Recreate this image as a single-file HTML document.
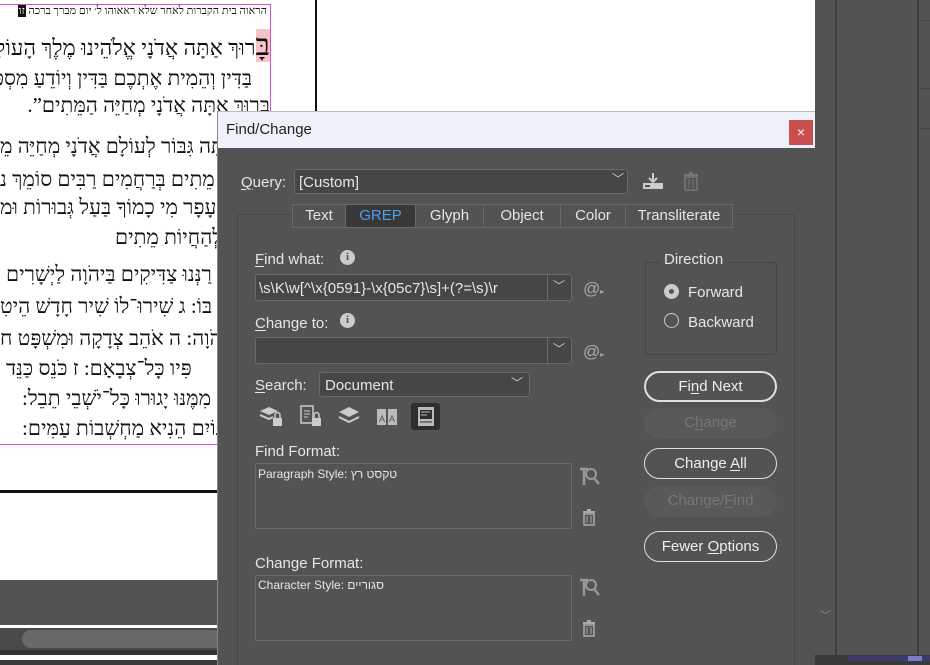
<!DOCTYPE html>
<html><head><meta charset="utf-8"><style>
*{margin:0;padding:0;box-sizing:border-box}
html,body{width:930px;height:665px;overflow:hidden}
body{position:relative;background:#fff;font-family:"Liberation Sans",sans-serif}
.abs{position:absolute}
.heb{font-family:"Liberation Serif","Noto Serif CJK SC","DejaVu Serif",serif;direction:rtl;white-space:nowrap;color:#111;font-size:21px;position:absolute;right:660px;text-align:right}
.hl{font-family:"Liberation Serif","Noto Serif CJK SC","DejaVu Serif",serif;direction:rtl;white-space:nowrap;color:#111;font-size:21px;position:absolute}
.dlg{left:217px;top:111px;width:598px;height:554px;background:#535353;border-left:1px solid #888}
.t{color:#e6e6e6;font-size:15px;position:absolute;white-space:nowrap}
.box{position:absolute;border:1px solid #6a6a6a;background:#464646;border-radius:3px}
.btn{position:absolute;left:644px;width:133px;height:31px;border:1px solid #e0e0e0;border-radius:16px;color:#eee;font-size:15px;text-align:center;line-height:29px}
.dis{border:none;background:#595959;color:#777}
.tab{position:absolute;top:204px;height:24px;border:1px solid #6a6a6a;color:#e6e6e6;font-size:15px;text-align:center;line-height:22px;background:#535353}
u{text-decoration:underline;text-underline-offset:2px}
</style></head><body>
<div class="abs" style="left:0;top:4px;width:271px;height:441px;border:1px solid #d64ed6;border-left:none"></div>
<div class="abs" style="left:315px;top:0;width:2px;height:111px;background:#111"></div>
<div class="abs" style="left:0;top:490px;width:217px;height:3px;background:#111"></div>
<div class="heb" style="top:5px;font-size:11px;right:663px">הראוה בית הקברות לאחר שלא ראאוהו ל׳ יום מברך ברכה <span style="background:#111;color:#fff;padding:0 1px">זו</span></div>
<div class="heb" style="top:33px;font-size:22px"><span style="background:#f6c4c8;font-size:30px;line-height:26px">בָּ</span>רוּךְ אַתָּה אֲדֹנָי אֱלֹהֵינוּ מֶלֶךְ הָעוֹלָם</div>
<div class="heb" style="top:66px;right:678px">בַּדִּין  וְהֵמִית אֶתְכֶם בַּדִּין וְיוֹדֵעַ מִסְפַּר</div>
<div class="heb" style="top:93px">בָּרוּךְ אַתָּה אֲדֹנָי מְחַיֵּה הַמֵּתִים”.</div>
<div class="hl" style="top:134px;left:0">אַתָּה גִּבּוֹר לְעוֹלָם אֲדֹנָי מְחַיֵּה מֵ</div>
<div class="hl" style="top:167px;left:0">מֵתִים  בְּרַחֲמִים רַבִּים סוֹמֵךְ נ</div>
<div class="hl" style="top:195px;left:0">עָפָר מִי כָמוֹךָ בַּעַל גְּבוּרוֹת וּמ</div>
<div class="hl" style="top:225px;left:115px">לְהַחֲיוֹת מֵתִים</div>
<div class="hl" style="top:262px;left:6px">רַנְּנוּ צַדִּיקִים בַּיהֹוָה לַיְשָׁרִים</div>
<div class="hl" style="top:294px;left:0">בּוֹ:      ג שִׁירוּ־לוֹ שִׁיר חָדָשׁ הֵיטִ</div>
<div class="hl" style="top:326px;left:0">יְהֹוָה:     ה אֹהֵב צְדָקָה וּמִשְׁפָּט ח</div>
<div class="hl" style="top:356px;left:6px">פִּיו כָּל־צְבָאָם:     ז כֹּנֵס כַּנֵּד</div>
<div class="hl" style="top:386px;left:22px">מִמֶּנּוּ יָגוּרוּ כָּל־יֹשְׁבֵי תֵבֵל:</div>
<div class="hl" style="top:416px;left:22px">גּוֹיִם הֵנִיא מַחְשְׁבוֹת עַמִּים:</div>
<div class="abs" style="left:0;top:580px;width:217px;height:45px;background:#535353"></div>
<div class="abs" style="left:0;top:628px;width:217px;height:22px;background:#4a4a4a"></div>
<div class="abs" style="left:22px;top:630px;width:200px;height:18px;background:#696969;border-radius:9px"></div>
<div class="abs" style="left:0;top:650px;width:217px;height:5px;background:#333"></div>
<div class="abs" style="left:0;top:660px;width:217px;height:5px;background:#3a3a3a"></div>
<div class="abs" style="left:815px;top:0;width:115px;height:665px;background:#535353"></div>
<div class="abs" style="left:835px;top:0;width:2px;height:655px;background:#3e3e3e"></div>
<div class="abs" style="left:917px;top:0;width:2px;height:655px;background:#3e3e3e"></div>
<div class="abs" style="left:919px;top:20px;width:11px;height:1px;background:#444"></div>
<div class="abs" style="left:919px;top:88px;width:11px;height:1px;background:#444"></div>
<div class="abs" style="left:919px;top:128px;width:11px;height:1px;background:#444"></div>
<div class="abs" style="left:820px;top:607px;color:#888;font-size:11px">﹀</div>
<div class="abs" style="left:815px;top:655px;width:115px;height:10px;background:#3a3a3a"></div>
<div class="abs" style="left:848px;top:656px;width:82px;height:5px;background:#3d3b6a"></div>
<div class="abs" style="left:908px;top:656px;width:14px;height:5px;background:#7d7bcf"></div>
<div class="abs dlg">
<div class="abs" style="left:0;top:0;width:597px;height:37px;background:#eef1f9;border-top:1px solid #bbb"></div>
<div class="abs" style="left:8px;top:10px;font-size:15px;color:#222">Find/Change</div>
<div class="abs" style="left:571px;top:9px;width:24px;height:25px;background:#c94f4f;color:#fff;font-size:14px;text-align:center;line-height:24px">×</div>
</div>
<div class="t" style="left:241px;top:174px"><u>Q</u>uery:</div>
<div class="box" style="left:294px;top:169px;width:334px;height:25px"></div>
<div class="t" style="left:299px;top:174px">[Custom]</div>
<div class="t" style="left:612px;top:170px;font-size:12px;color:#ccc">﹀</div>
<svg class="abs" style="left:641px;top:171px" width="24" height="20"><path d="M12 2v8M8 7l4 4 4-4" stroke="#ccc" stroke-width="2" fill="none"/><rect x="2" y="12" width="20" height="6" fill="#ccc"/><rect x="4" y="14" width="5" height="2" fill="#535353"/></svg>
<svg class="abs" style="left:682px;top:171px" width="18" height="20"><rect x="2" y="3" width="14" height="2" fill="#777"/><rect x="7" y="1" width="4" height="2" fill="#777"/><rect x="3" y="6" width="12" height="13" fill="none" stroke="#777" stroke-width="1.5"/><path d="M7 8v9M11 8v9" stroke="#777"/></svg>
<div class="abs" style="left:237px;top:214px;width:558px;height:460px;border:1px solid #474747;border-radius:3px"></div>
<div class="tab" style="left:292px;width:54px">Text</div>
<div class="tab" style="left:345px;width:71px;background:#383838;color:#4d9ff0">GREP</div>
<div class="tab" style="left:415px;width:69px">Glyph</div>
<div class="tab" style="left:483px;width:78px">Object</div>
<div class="tab" style="left:560px;width:66px">Color</div>
<div class="tab" style="left:625px;width:108px">Transliterate</div>
<div class="t" style="left:255px;top:251px"><u>F</u>ind what:</div>
<div class="abs" style="left:340px;top:250px;width:15px;height:15px;border-radius:50%;background:#ccc;color:#535353;font-size:11px;font-weight:bold;text-align:center;line-height:15px;font-family:'Liberation Serif',serif">i</div>
<div class="box" style="left:255px;top:274px;width:317px;height:27px"></div>
<div class="abs" style="left:547px;top:275px;width:1px;height:25px;background:#6a6a6a"></div>
<div class="t" style="left:259px;top:280px">\s\K\w[^\x{0591}-\x{05c7}\s]+(?=\s)\r</div>
<div class="t" style="left:553px;top:277px;font-size:12px;color:#ccc">﹀</div>
<div class="t" style="left:583px;top:279px;font-size:17px;color:#aaa">@<span style="font-size:8px">▸</span></div>
<div class="t" style="left:255px;top:315px"><u>C</u>hange to:</div>
<div class="abs" style="left:340px;top:313px;width:15px;height:15px;border-radius:50%;background:#ccc;color:#535353;font-size:11px;font-weight:bold;text-align:center;line-height:15px;font-family:'Liberation Serif',serif">i</div>
<div class="box" style="left:255px;top:337px;width:317px;height:27px"></div>
<div class="abs" style="left:547px;top:338px;width:1px;height:25px;background:#6a6a6a"></div>
<div class="t" style="left:553px;top:340px;font-size:12px;color:#ccc">﹀</div>
<div class="t" style="left:583px;top:342px;font-size:17px;color:#aaa">@<span style="font-size:8px">▸</span></div>
<div class="t" style="left:255px;top:377px"><u>S</u>earch:</div>
<div class="box" style="left:319px;top:372px;width:211px;height:25px"></div>
<div class="t" style="left:325px;top:377px">Document</div>
<div class="t" style="left:511px;top:374px;font-size:12px;color:#ccc">﹀</div>
<svg class="abs" style="left:258px;top:404px" width="26" height="24"><path d="M2 7l9-4 9 4-9 4z" fill="#ccc"/><path d="M2 11l9 4 4-2" stroke="#ccc" stroke-width="2" fill="none"/><rect x="15" y="14" width="9" height="8" fill="#ccc"/><path d="M17 14v-3a2.5 2.5 0 0 1 5 0v3" stroke="#ccc" stroke-width="1.5" fill="none"/></svg>
<svg class="abs" style="left:298px;top:404px" width="26" height="24"><rect x="3" y="2" width="12" height="17" fill="none" stroke="#ccc" stroke-width="1.5"/><path d="M6 7h6M6 10h6M6 13h4" stroke="#ccc"/><rect x="14" y="14" width="9" height="8" fill="#ccc"/><path d="M16 14v-3a2.5 2.5 0 0 1 5 0v3" stroke="#ccc" stroke-width="1.5" fill="none"/></svg>
<svg class="abs" style="left:337px;top:404px" width="24" height="24"><path d="M2 8l10-5 10 5-10 5z" fill="#ccc"/><path d="M2 13l10 5 10-5" stroke="#ccc" stroke-width="2" fill="none"/></svg>
<svg class="abs" style="left:375px;top:404px" width="24" height="24"><rect x="2" y="5" width="20" height="16" fill="#bbb"/><path d="M12 2v21" stroke="#535353" stroke-width="2"/><text x="4" y="18" font-size="9" fill="#535353" font-family="Liberation Sans">A</text><text x="14" y="18" font-size="9" fill="#535353" font-family="Liberation Sans">A</text></svg>
<div class="abs" style="left:411px;top:403px;width:29px;height:27px;background:#2e2e2e;border-radius:3px"></div>
<svg class="abs" style="left:416px;top:406px" width="20" height="21"><rect x="2" y="1" width="16" height="19" fill="#bbb"/><rect x="4" y="4" width="12" height="9" fill="#2e2e2e"/><path d="M5 6h9M5 9h6" stroke="#bbb"/><path d="M4 16h12" stroke="#2e2e2e"/></svg>
<div class="t" style="left:255px;top:443px">Find Format:</div>
<div class="abs" style="left:255px;top:463px;width:317px;height:66px;border:1px solid #6a6a6a"></div>
<div class="t" style="left:258px;top:467px;font-size:12px">Paragraph Style: <span style="font-family:'Liberation Sans','Noto Sans CJK SC',sans-serif">טקסט רץ</span></div>
<svg class="abs" style="left:578px;top:465px" width="24" height="22"><path d="M2 4h8M6 4v16" stroke="#999" stroke-width="2.5"/><circle cx="13" cy="9" r="5" fill="none" stroke="#999" stroke-width="2"/><path d="M16 13l5 6" stroke="#999" stroke-width="2.5"/></svg>
<svg class="abs" style="left:582px;top:509px" width="14" height="17"><rect x="1" y="2" width="12" height="2" fill="#aaa"/><rect x="5" y="0" width="4" height="2" fill="#aaa"/><rect x="2" y="5" width="10" height="11" fill="none" stroke="#aaa" stroke-width="1.5"/><path d="M5 7v7M9 7v7" stroke="#aaa"/></svg>
<div class="t" style="left:255px;top:555px">Change Format:</div>
<div class="abs" style="left:255px;top:575px;width:317px;height:66px;border:1px solid #6a6a6a"></div>
<div class="t" style="left:258px;top:578px;font-size:12px">Character Style:  <span style="font-family:'Liberation Sans','Noto Sans CJK SC',sans-serif">סגוריים</span></div>
<svg class="abs" style="left:578px;top:576px" width="24" height="22"><path d="M2 4h8M6 4v16" stroke="#999" stroke-width="2.5"/><circle cx="13" cy="9" r="5" fill="none" stroke="#999" stroke-width="2"/><path d="M16 13l5 6" stroke="#999" stroke-width="2.5"/></svg>
<svg class="abs" style="left:582px;top:620px" width="14" height="17"><rect x="1" y="2" width="12" height="2" fill="#aaa"/><rect x="5" y="0" width="4" height="2" fill="#aaa"/><rect x="2" y="5" width="10" height="11" fill="none" stroke="#aaa" stroke-width="1.5"/><path d="M5 7v7M9 7v7" stroke="#aaa"/></svg>
<div class="abs" style="left:645px;top:262px;width:132px;height:93px;border:1px solid #444;border-radius:3px"></div>
<div class="t" style="left:659px;top:251px;background:#535353;padding:0 5px">Direction</div>
<div class="abs" style="left:664px;top:284px;width:15px;height:15px;border-radius:50%;background:#ccc"></div>
<div class="abs" style="left:669px;top:289px;width:5px;height:5px;border-radius:50%;background:#535353"></div>
<div class="t" style="left:688px;top:284px">Forward</div>
<div class="abs" style="left:664px;top:313px;width:15px;height:15px;border-radius:50%;border:1px solid #ccc"></div>
<div class="t" style="left:688px;top:314px">Backward</div>
<div class="btn" style="top:371px;border-width:2px;line-height:27px">Fi<u>n</u>d Next</div>
<div class="btn dis" style="top:408px">C<u>h</u>ange</div>
<div class="btn" style="top:448px">Change <u>A</u>ll</div>
<div class="btn dis" style="top:486px">Change/<u>F</u>ind</div>
<div class="btn" style="top:531px">Fewer <u>O</u>ptions</div>
</body></html>
